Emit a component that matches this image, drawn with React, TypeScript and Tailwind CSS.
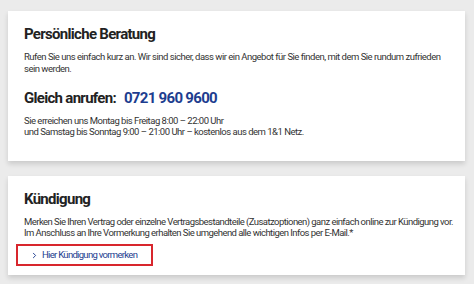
import { ChevronRight } from "lucide-react";

const font = { fontFamily: "Roboto, 'Liberation Sans', sans-serif" };

export default function App() {
  return (
    <div className="w-[474px] h-[284px] overflow-hidden bg-[#ebebeb] pt-[11px] pl-2 pr-[9px]" style={font}>
      {/* Beratung */}
      <section className="bg-white shadow-[0_3px_5px_rgba(0,0,0,0.14)] pt-[13px] pb-[24px] pl-4 pr-2">
        <h2 className="text-[15px] leading-[20px] font-bold text-[#222] tracking-[-0.7px]">Persönliche Beratung</h2>
        <p className="mt-[7px] text-[9.5px] leading-[12px] text-[#333] tracking-[-0.5px] whitespace-nowrap">
          Rufen Sie uns einfach kurz an. Wir sind sicher, dass wir ein Angebot für Sie finden, mit dem Sie rundum zufrieden
          <br />
          sein werden.
        </p>
        <div className="mt-[13px] flex text-[15px] leading-[20px] font-bold tracking-[-0.7px]">
          <span className="text-[#222]">Gleich anrufen:</span>
          <span className="ml-2 text-[#1d3d8f]">0721 960 9600</span>
        </div>
        <p className="mt-[7px] text-[9.5px] leading-[11px] text-[#333] tracking-[-0.5px] whitespace-nowrap">
          Sie erreichen uns Montag bis Freitag 8:00 – 22:00 Uhr
          <br />
          und Samstag bis Sonntag 9:00 – 21:00 Uhr – kostenlos aus dem 1&amp;1 Netz.
        </p>
      </section>

      {/* Kündigung */}
      <section className="mt-[15px] bg-white shadow-[0_3px_5px_rgba(0,0,0,0.14)] pt-[13px] pb-[9px] pl-4 pr-2">
        <h2 className="text-[15px] leading-[20px] font-bold text-[#222] tracking-[-0.7px]">Kündigung</h2>
        <p className="mt-[7px] text-[9.5px] leading-[11px] text-[#333] tracking-[-0.55px] whitespace-nowrap">
          Merken Sie Ihren Vertrag oder einzelne Vertragsbestandteile (Zusatzoptionen) ganz einfach online zur Kündigung vor.
          <br />
          Im Anschluss an Ihre Vormerkung erhalten Sie umgehend alle wichtigen Infos per E-Mail.*
        </p>
        <a
          href="#"
          className="mt-[6px] -ml-2 flex items-center w-[137px] h-[22px] border-2 border-[#d8262d] pl-3 text-[9.5px] text-[#1d3d8f] tracking-[-0.7px] whitespace-nowrap"
        >
          <ChevronRight className="w-[9px] h-[9px] shrink-0" strokeWidth={2.5} />
          <span className="ml-[3px]">Hier Kündigung vormerken</span>
        </a>
      </section>
    </div>
  );
}
